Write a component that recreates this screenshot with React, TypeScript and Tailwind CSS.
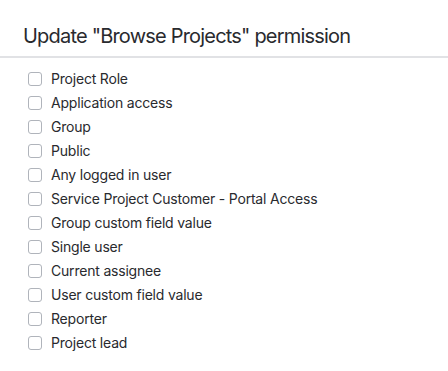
const options = [
  "Project Role",
  "Application access",
  "Group",
  "Public",
  "Any logged in user",
  "Service Project Customer - Portal Access",
  "Group custom field value",
  "Single user",
  "Current assignee",
  "User custom field value",
  "Reporter",
  "Project lead",
];

export default function App() {
  return (
    <div className="w-[448px] h-[371px] bg-white text-[#292a2e] font-['Inter',sans-serif]">
      <div className="h-[58px] pt-[22px] pl-[23px] border-b-2 border-[#e1e2e5]">
        <h1 className="text-[20px] leading-[28px] font-normal tracking-[-0.8px]">
          Update "Browse Projects" permission
        </h1>
      </div>
      <ul className="pt-[9px] pl-[28px]">
        {options.map((label) => (
          <li key={label} className="flex items-center gap-[9px] h-6">
            <span className="shrink-0 w-[14px] h-[14px] rounded-[3px] border-[1.5px] border-[#b0b4bb] bg-white" />
            <span className="text-[14px] leading-6 tracking-[-0.2px]">{label}</span>
          </li>
        ))}
      </ul>
    </div>
  );
}
